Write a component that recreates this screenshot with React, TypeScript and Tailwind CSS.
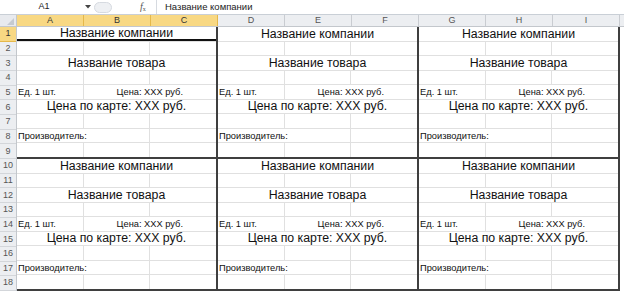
import React from "react";

const COLS = ["A", "B", "C", "D", "E", "F", "G", "H", "I"];
const ROWH = "h-[14.667px]";

function Cell({ className = "", children }: { className?: string; children?: React.ReactNode }) {
  return (
    <div className={`bg-white flex items-center overflow-visible whitespace-nowrap leading-none ${className}`}>
      {children}
    </div>
  );
}

function Block({ selected = false }: { selected?: boolean }) {
  return (
    <div className="grid grid-cols-3 grid-rows-9 gap-px bg-[#e0e0e0] border-r-2 border-b-2 border-[#3f3f3f] h-[132px] w-[201px]">
      <Cell
        className={`col-span-3 justify-center text-[12.3px] bg-[#ececec] ${
          selected ? "border-b-2 border-[#111]" : ""
        }`}
      >
        Название компании
      </Cell>
      <Cell />
      <Cell />
      <Cell />
      <Cell className="col-span-3 justify-center text-[12.3px]">Название товара</Cell>
      <Cell />
      <Cell />
      <Cell />
      <Cell className="text-[9.3px] pl-[1px] pt-[2px]">Ед. 1 шт.</Cell>
      <Cell className="col-span-2 justify-center text-[9.3px] pt-[2px]">Цена: XXX руб.</Cell>
      <Cell className="col-span-3 justify-center text-[12.3px] bg-[#d8d8d8]">Цена по карте: XXX руб.</Cell>
      <Cell />
      <Cell />
      <Cell />
      <Cell className="col-span-2 text-[9.3px] pl-[1px] pt-[1px]">Производитель:</Cell>
      <Cell />
      <Cell />
      <Cell />
      <Cell />
    </div>
  );
}

export default function App() {
  return (
    <div className="w-[624px] h-[292px] bg-white overflow-hidden text-[#111] font-['Liberation_Sans',Arial,sans-serif]">
      {/* formula bar */}
      <div className="h-[15px] flex items-center border-b border-[#c9cfd6] bg-white">
        <div className="w-[84px] flex justify-center text-[9px] text-[#222] pl-[4px]">A1</div>
        <svg width="6" height="4" viewBox="0 0 6 4" className="ml-[1px]">
          <path d="M0 0 L6 0 L3 3.5 Z" fill="#444" />
        </svg>
        <div className="ml-[3px] w-[18px] h-[11px] rounded-full bg-[#eef0f3] border border-[#d6dae0]" />
        <div className="ml-[28px] w-[12px] flex items-end text-[#555] font-['Liberation_Serif',serif] italic text-[10px] leading-none">
          f<span className="text-[6px] not-italic">x</span>
        </div>
        <div className="ml-[4px] h-[14px] border-l border-[#d6dae0]" />
        <div className="ml-[8px] text-[9.5px] text-[#222]">Название компании</div>
      </div>
      {/* column headers */}
      <div className="h-[12px] flex bg-[#eceef1] border-b border-[#c3c7cc]">
        <div className="w-[17px] border-r border-[#c3c7cc] relative bg-[#e8eaee]">
          <svg width="7" height="7" viewBox="0 0 7 7" className="absolute right-[2px] bottom-[1px]">
            <path d="M7 0 L7 7 L0 7 Z" fill="#c5cad1" />
          </svg>
        </div>
        {COLS.map((c, i) => (
          <div
            key={c}
            className={`w-[67px] flex items-center justify-center text-[9px] leading-none border-r ${
              i < 3
                ? "bg-[#f8d883] border-[#e5b84a] text-[#333]"
                : "bg-[#eceef1] border-[#c9ccd1] text-[#555]"
            }`}
          >
            {c}
          </div>
        ))}
      </div>
      {/* body */}
      <div className="flex">
        <div className="w-[17px] flex flex-col bg-[#eceef1] border-r border-[#c3c7cc]">
          {Array.from({ length: 18 }, (_, i) => (
            <div
              key={i}
              className={`${ROWH} flex items-center justify-center text-[9px] leading-none border-b ${
                i === 0
                  ? "bg-[#f8d883] border-[#e5b84a] text-[#333]"
                  : "border-[#d3d6da] text-[#555]"
              }`}
            >
              {i + 1}
            </div>
          ))}
        </div>
        <div className="grid grid-cols-[repeat(3,201px)] grid-rows-[repeat(2,132px)]">
          <Block selected />
          <Block />
          <Block />
          <Block />
          <Block />
          <Block />
        </div>
      </div>
    </div>
  );
}
